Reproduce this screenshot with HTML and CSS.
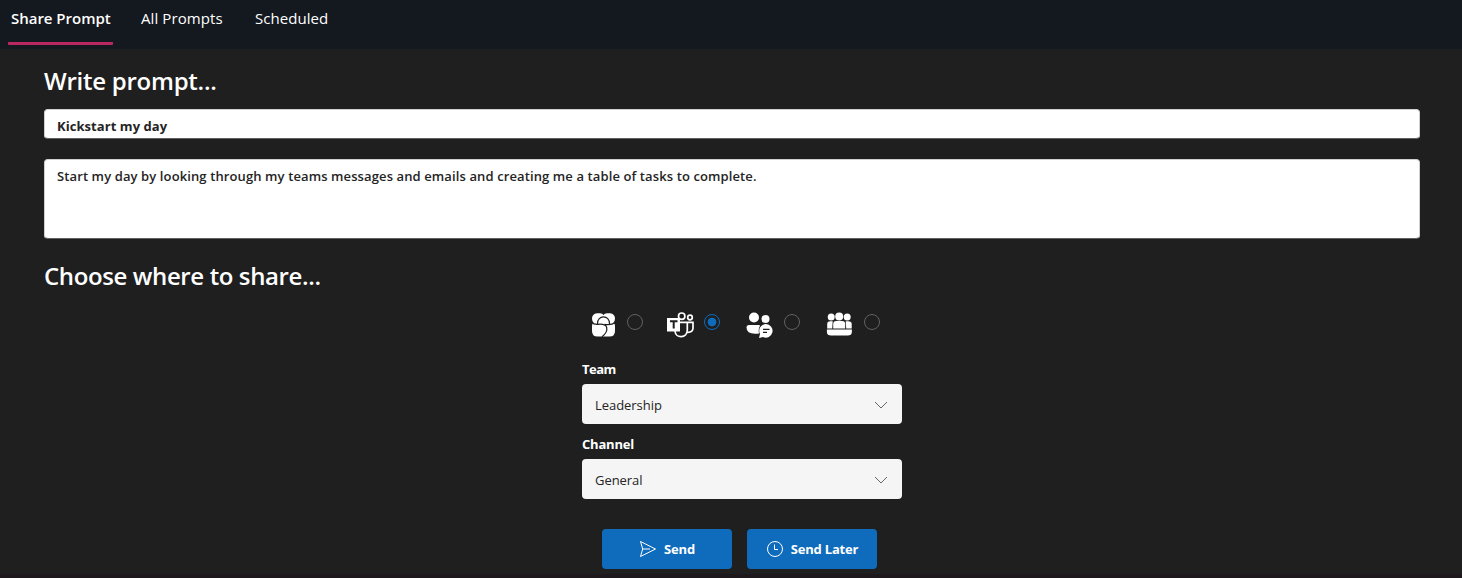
FILE: index.html
```html
<!DOCTYPE html>
<html lang="en">
<head>
<meta charset="utf-8">
<title>Share Prompt</title>
<link rel="stylesheet" href="styles.css">
</head>
<body>
<nav class="tabs">
  <a class="tab active"><span class="t-share">Share Prompt</span></a>
  <a class="tab all"><span class="t-all">All Prompts</span></a>
  <a class="tab"><span class="t-sched">Scheduled</span></a>
</nav>
<main class="page">
  <h1 class="heading h-write">Write prompt...</h1>
  <div class="field title-field"><span>Kickstart my day</span></div>
  <div class="field body-field"><span>Start my day by looking through my teams messages and emails and creating me a table of tasks to complete.</span></div>
  <h1 class="heading h-choose">Choose where to share...</h1>
  <div class="targets">
    <div class="target first">
      <svg class="icon" width="28" height="28" viewBox="0 0 28 28">
        <path d="M7 2.300H10Q12.500 2.300 13.500 4Q14.500 2.300 17 2.300H20Q25 3 25 7.500Q25 10 23.500 11.500Q25 12.500 25 15V20Q25 25.500 19.500 25.500H7.500Q2 25.500 2 20V15Q2 12.500 3.500 11.500Q2 10 2 7.500Q2 3 7 2.300Z" fill="#fff"/>
        <path d="M1.500 11.300Q4 13.700 8 13.300Q15.500 12.600 16.700 16.500C17.500 20 15 23.500 12 25.800M7.500 13C7 3.500 20 3.500 19.500 13M14.500 13.400Q21.500 14.500 25.500 11.300" fill="none" stroke="#1f1f1f" stroke-width="1.200"/>
      </svg>
      <i class="radio"></i>
    </div>
    <div class="target">
      <svg class="icon" width="28" height="28" viewBox="0 0 28 28" fill="none" stroke="#fff" stroke-width="1.700">
        <circle cx="15.700" cy="5.200" r="3.200"/><circle cx="24" cy="6.500" r="2.300"/>
        <path d="M13.500 11.300H21.300V19C21.300 27.500 9.500 28 9 20M21.300 11.300H27V17.500Q26.500 21.500 21.500 21.300"/>
        <path d="M1 7H14V20.500H1Z" fill="#fff" stroke="none"/>
        <path d="M4 10.300H11.500M7.700 10V17.500" stroke="#1f1f1f" stroke-width="2"/>
      </svg>
      <i class="radio checked"></i>
    </div>
    <div class="target">
      <svg class="icon" width="28" height="28" viewBox="0 0 28 28" fill="#fff">
        <circle cx="8" cy="6.500" r="5"/><circle cx="19.500" cy="8" r="4"/>
        <path d="M3 14H13Q14 14 14 15Q12 18 13 22.500Q.500 24 .500 16.500Q.500 14 3 14Z"/>
        <path d="M20 13A6.800 6.800 0 1 1 17 26L13 27L14 23A6.800 6.800 0 0 1 20 13Z"/>
        <path d="M17 18.300H23.500M17 21.300H21" fill="none" stroke="#1f1f1f" stroke-width="1.200"/>
      </svg>
      <i class="radio"></i>
    </div>
    <div class="target">
      <svg class="icon" width="28" height="28" viewBox="0.800 0 28 28" fill="#fff">
        <circle cx="6" cy="6" r="3.500"/><circle cx="14" cy="5.500" r="4"/><circle cx="22" cy="6" r="3.500"/>
        <path d="M2 17.500V13Q2 10.300 5 10.300H7.500L7 17.500ZM8 17.500V13Q8 10 11 10H17Q20 10 20 13V17.500ZM21 17.500L20.500 10.300H23Q26.500 10.300 26.500 13V17.500Z"/>
        <path d="M1.700 18.500H26.700V21Q26.500 24.500 22.500 24.500H6Q1.700 24.500 1.700 21Z"/>
      </svg>
      <i class="radio"></i>
    </div>
  </div>
  <div class="form">
    <label class="label l-team"><span>Team</span></label>
    <div class="select"><span>Leadership</span>
      <svg width="14" height="8" viewBox="0 0 14 8"><path d="M1 1L7 7L13 1" fill="none" stroke="#666"/></svg></div>
    <label class="label"><span>Channel</span></label>
    <div class="select"><span>General</span>
      <svg width="14" height="8" viewBox="0 0 14 8"><path d="M1 1L7 7L13 1" fill="none" stroke="#666"/></svg></div>
  </div>
  <div class="actions">
    <button class="btn">
      <svg width="18" height="18" viewBox="0 0 18 18" fill="none" stroke="#fff"><path d="M1.500 1.500L16.500 9L1.500 16.500L3.700 9ZM3.700 9H11"/></svg>
      <span>Send</span></button>
    <button class="btn">
      <svg width="18" height="18" viewBox="0 0 18 18" fill="none" stroke="#fff"><circle cx="9" cy="9" r="7.500"/><path d="M8.500 4.500V9.500H12"/></svg>
      <span>Send Later</span></button>
  </div>
</main>
</body>
</html>
```
FILE: styles.css
```css
* { box-sizing: border-box; }
body { margin: 0; height: 578px; overflow: hidden; background: #1f1f1f; color: #fff; font: 13px "Segoe UI", "Open Sans", "Noto Sans", sans-serif; }
span { white-space: nowrap; }
.tabs { height: 49px; display: flex; background: #14191f; padding-left: 8px; font-size: 15px; line-height: 22px; }
.tab { height: 45px; padding-top: 7px; margin-right: 28px; }
.tab.active { width: 105px; padding-left: 3px; font-weight: 600; border-bottom: 3px solid #b9285f; border-radius: 1px; }
.tab.all { width: 86px; }
.t-share { letter-spacing: -0.02px; }
.t-all { letter-spacing: 0.1px; }
.t-sched { letter-spacing: 0.05px; }
.page { height: 529px; padding: 13px 42px 0 44px; border-bottom: 4px solid #1c181b; }
.heading { margin: 0; font-size: 24px; line-height: 37px; height: 36px; font-weight: 600; white-space: nowrap; }
.h-write { letter-spacing: -0.25px; }
.h-choose { letter-spacing: -0.38px; line-height: 36px; }
.field { background: #fff; color: #242424; border: 1px solid #d1d1d1; border-bottom-color: #616161; border-radius: 4px; padding: 0 12px; }
.title-field { height: 30px; margin-top: 11px; line-height: 33px; font-weight: 700; letter-spacing: 0.06px; }
.body-field { height: 80px; margin: 20px 0 19px; line-height: 32px; font-weight: 600; letter-spacing: 0.11px; }
.targets { display: flex; height: 28px; margin: 17px 0 0 546px; }
.target { display: flex; width: 80px; gap: 10px; }
.target.first { width: 76px; gap: 9px; }
.icon { flex: none; }
.radio { flex: none; width: 16px; height: 16px; margin-top: 3px; border: 1px solid #616161; border-radius: 50%; }
.radio.checked { border-color: #0f6cbd; background: radial-gradient(circle, #0f6cbd 0 4px, transparent 4.700px); }
.form { width: 320px; margin: 20px 0 0 538px; }
.label { display: block; height: 25px; line-height: 21px; font-weight: 700; letter-spacing: -0.2px; }
.l-team { letter-spacing: -0.5px; }
.select { height: 40px; margin-bottom: 10px; padding: 2px 14px 0 13px; background: #f5f5f5; color: #242424; border-radius: 4px; display: flex; align-items: center; justify-content: space-between; letter-spacing: -0.05px; }
.actions { display: flex; gap: 15px; margin: 30px 0 0 558px; }
.btn { width: 130px; height: 40px; border: 0; border-radius: 4px; background: #0f6cbd; color: #fff; font: inherit; font-weight: 700; letter-spacing: -0.2px; display: flex; align-items: center; justify-content: center; gap: 7px; padding: 0; }
```
